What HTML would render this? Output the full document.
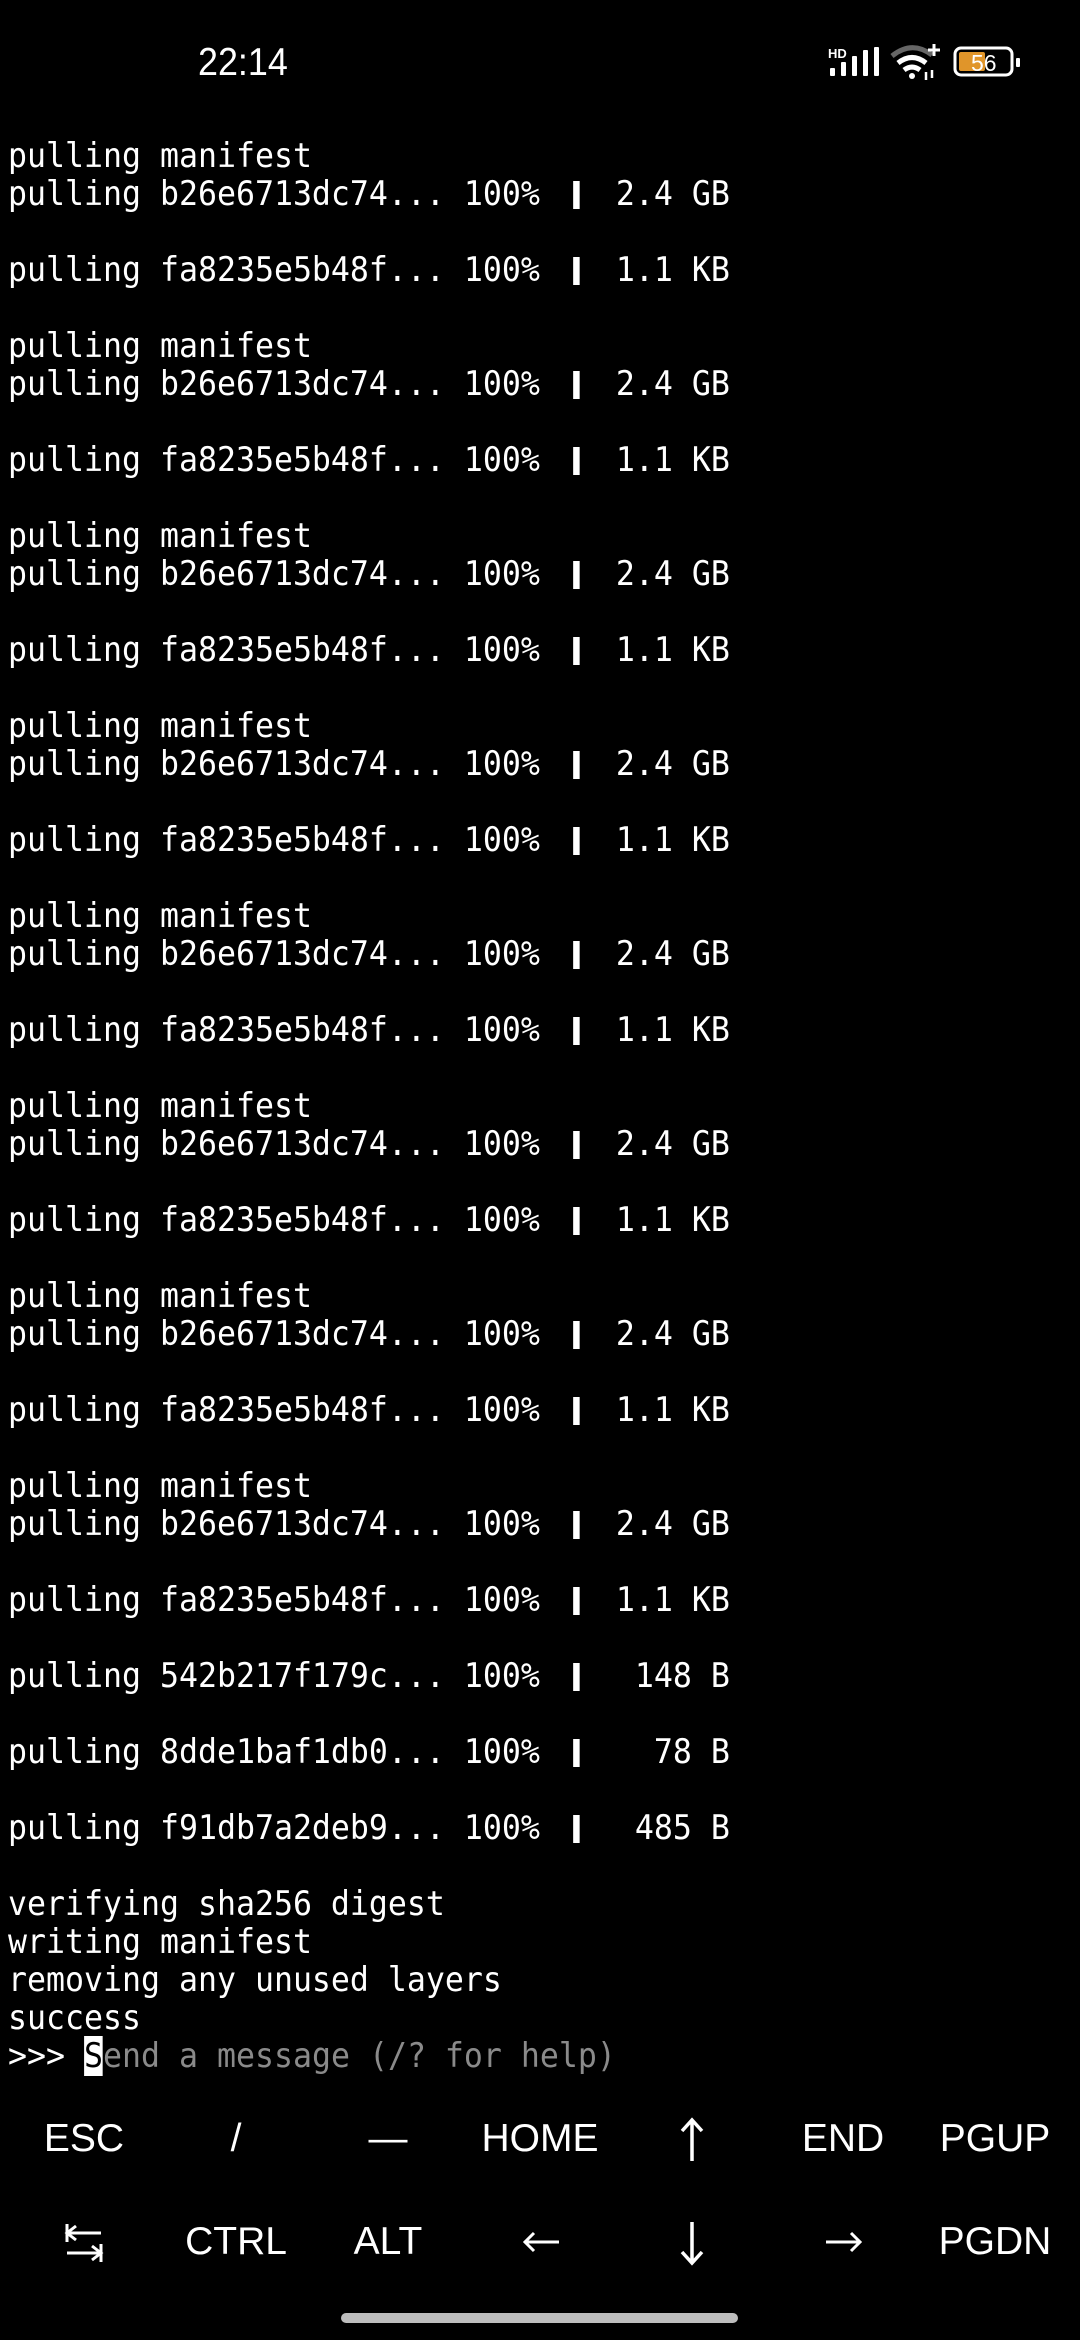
<!DOCTYPE html>
<html><head><meta charset="utf-8"><style>
html,body{margin:0;padding:0;background:#000;width:1080px;height:2340px;overflow:hidden;position:relative}
.time{position:absolute;left:198px;top:41px;font:39px "Liberation Sans",sans-serif;color:#fff;transform:scaleX(0.92);transform-origin:left}
.term{position:absolute;left:8px;top:137px;margin:0;font-family:"DejaVu Sans Mono",monospace;font-size:34px;line-height:38px;color:#fff;white-space:pre;transform:scaleX(0.928);transform-origin:left top}
.bar{display:inline-block;width:20.47px;height:38px;vertical-align:top;position:relative}
.bar:after{content:"";position:absolute;right:-2px;top:6px;width:7px;height:28px;background:#fff}
.cur{background:#fff;color:#000}
.gray{color:#8a8a8a}
.k{position:absolute;width:200px;margin-left:-100px;text-align:center;font:39px "Liberation Sans",sans-serif;color:#fff;height:50px;line-height:50px}
.hb{position:absolute;left:341px;top:2313px;width:397px;height:10px;border-radius:5px;background:#bdbdbd}
svg.a{position:absolute}
</style></head><body>
<div class="time">22:14</div>
<svg style="position:absolute;left:820px;top:40px" width="210" height="45" viewBox="820 40 210 45">
<text x="828" y="58" font-family="Liberation Sans" font-weight="bold" font-size="13" fill="#fff">HD</text>
<rect x="830" y="68" width="5" height="8" rx="1" fill="#fff"/>
<rect x="841" y="62" width="5" height="14" rx="1" fill="#fff"/>
<rect x="852" y="56" width="5" height="20" rx="1" fill="#fff"/>
<rect x="863" y="50" width="5" height="26" rx="1" fill="#fff"/>
<rect x="874" y="47" width="5" height="29" rx="1" fill="#fff"/>
<path d="M892 56 Q912 40 932 55" stroke="#666" stroke-width="5" fill="none"/>
<path d="M898 63 Q912 52 926 63" stroke="#fff" stroke-width="5" fill="none"/>
<path d="M904 70 Q912 64 920 70" stroke="#fff" stroke-width="5" fill="none"/>
<circle cx="912" cy="76" r="3" fill="#fff"/>
<path d="M934 44v12M928 50h12" stroke="#fff" stroke-width="3"/>
<path d="M926 72v8M932 70v8" stroke="#fff" stroke-width="2.5"/>
<rect x="955" y="48" width="57" height="27" rx="6" fill="none" stroke="#fff" stroke-width="3"/>
<rect x="959" y="52" width="26" height="19" rx="2" fill="#e0952a"/>
<rect x="1016" y="58" width="4" height="9" rx="1" fill="#fff"/>
<text x="971" y="71" font-family="Liberation Sans" font-size="23" fill="#fff">56</text>
</svg>
<pre class="term">pulling manifest
pulling b26e6713dc74... 100% <span class="bar"></span>  2.4 GB

pulling fa8235e5b48f... 100% <span class="bar"></span>  1.1 KB

pulling manifest
pulling b26e6713dc74... 100% <span class="bar"></span>  2.4 GB

pulling fa8235e5b48f... 100% <span class="bar"></span>  1.1 KB

pulling manifest
pulling b26e6713dc74... 100% <span class="bar"></span>  2.4 GB

pulling fa8235e5b48f... 100% <span class="bar"></span>  1.1 KB

pulling manifest
pulling b26e6713dc74... 100% <span class="bar"></span>  2.4 GB

pulling fa8235e5b48f... 100% <span class="bar"></span>  1.1 KB

pulling manifest
pulling b26e6713dc74... 100% <span class="bar"></span>  2.4 GB

pulling fa8235e5b48f... 100% <span class="bar"></span>  1.1 KB

pulling manifest
pulling b26e6713dc74... 100% <span class="bar"></span>  2.4 GB

pulling fa8235e5b48f... 100% <span class="bar"></span>  1.1 KB

pulling manifest
pulling b26e6713dc74... 100% <span class="bar"></span>  2.4 GB

pulling fa8235e5b48f... 100% <span class="bar"></span>  1.1 KB

pulling manifest
pulling b26e6713dc74... 100% <span class="bar"></span>  2.4 GB

pulling fa8235e5b48f... 100% <span class="bar"></span>  1.1 KB

pulling 542b217f179c... 100% <span class="bar"></span>   148 B

pulling 8dde1baf1db0... 100% <span class="bar"></span>    78 B

pulling f91db7a2deb9... 100% <span class="bar"></span>   485 B

verifying sha256 digest
writing manifest
removing any unused layers
success
&gt;&gt;&gt; <span class="cur">S</span><span class="gray">end a message (/? for help)</span></pre>

<div class="k" style="left:84px;top:2114px">ESC</div>
<div class="k" style="left:236px;top:2114px">/</div>
<div class="k" style="left:388px;top:2114px">—</div>
<div class="k" style="left:540px;top:2114px">HOME</div>
<div class="k" style="left:843px;top:2114px">END</div>
<div class="k" style="left:995px;top:2114px">PGUP</div>
<div class="k" style="left:236px;top:2217px">CTRL</div>
<div class="k" style="left:388px;top:2217px">ALT</div>
<div class="k" style="left:995px;top:2217px">PGDN</div>

<!-- up arrow -->
<svg class="a" style="left:676px;top:2117px" width="32" height="46" viewBox="0 0 32 46"><path d="M16 44V3M6 14L16 3L26 14" stroke="#fff" stroke-width="3.5" fill="none"/></svg>
<!-- down arrow -->
<svg class="a" style="left:676px;top:2220px" width="32" height="46" viewBox="0 0 32 46"><path d="M16 2V43M6 32L16 43L26 32" stroke="#fff" stroke-width="3.5" fill="none"/></svg>
<!-- left arrow -->
<svg class="a" style="left:522px;top:2230px" width="38" height="24" viewBox="0 0 38 24"><path d="M37 12H3M12 3L3 12L12 21" stroke="#fff" stroke-width="3" fill="none"/></svg>
<!-- right arrow -->
<svg class="a" style="left:825px;top:2230px" width="38" height="24" viewBox="0 0 38 24"><path d="M1 12H35M26 3L35 12L26 21" stroke="#fff" stroke-width="3" fill="none"/></svg>
<!-- tab icon -->
<svg class="a" style="left:64px;top:2222px" width="40" height="42" viewBox="0 0 40 42"><path d="M3 2V20M3 11H37M12 4L3 11L12 18M37 22V40M3 31H37M28 24L37 31L28 38" stroke="#fff" stroke-width="3" fill="none"/></svg>

<div class="hb"></div>
</body></html>
